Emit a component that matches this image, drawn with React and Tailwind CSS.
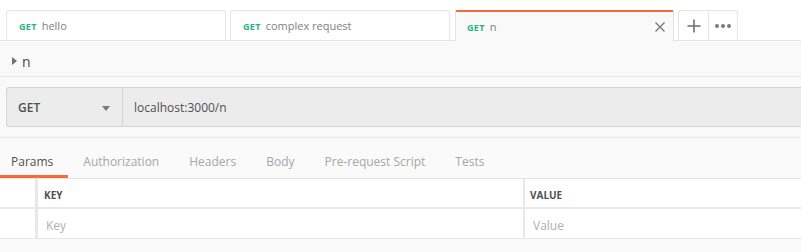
import React from "react";

const font = { fontFamily: '"Open Sans", "Liberation Sans", sans-serif' };

function Tab({ label, active, className }) {
  if (active) {
    return (
      <div
        className={`relative -mb-px h-[31px] flex items-center pt-[2px] bg-[#f9f9f9] border-x border-[#e2e2e2] border-t-2 border-t-[#f26b3a] rounded-t-[2px] ${className}`}
      >
        <span className="ml-[11px] text-[9px] font-bold text-[#26b47f] tracking-[0.3px]">GET</span>
        <span className="ml-[5px] text-[11px] text-[#808080]">{label}</span>
        <svg className="absolute right-[7px] top-[9px]" width="12" height="12" viewBox="0 0 12 12">
          <path d="M1.5 1.5 L10.5 10.5 M10.5 1.5 L1.5 10.5" stroke="#7a7a7a" strokeWidth="1.4" />
        </svg>
      </div>
    );
  }
  return (
    <div
      className={`h-[30px] flex items-center pt-[2px] bg-white border-x border-t border-[#e6e6e6] rounded-t-[3px] ${className}`}
    >
      <span className="ml-[12px] text-[9px] font-bold text-[#26b47f] tracking-[0.3px]">GET</span>
      <span className="ml-[5px] text-[11px] text-[#808080]">{label}</span>
    </div>
  );
}

export default function App() {
  const subTabs = ["Params", "Authorization", "Headers", "Body", "Pre-request Script", "Tests"];

  return (
    <div className="w-[801px] h-[252px] bg-[#f9f9f9] overflow-hidden" style={font}>
      {/* tabs row */}
      <div className="h-[41px] bg-white border-b border-[#e4e4e4] flex items-end">
        <Tab label="hello" className="ml-[6px] w-[220px]" />
        <Tab label="complex request" className="ml-[4px] w-[220px]" />
        <Tab label="n" active className="ml-[5px] w-[219px]" />
        <div className="ml-[4px] h-[30px] flex border-x border-t border-[#e6e6e6] rounded-t-[3px] bg-white">
          <div className="w-[30px] flex items-center justify-center border-r border-[#e6e6e6]">
            <svg width="14" height="14" viewBox="0 0 14 14">
              <path d="M7 0.5 V13.5 M0.5 7 H13.5" stroke="#6e6e6e" strokeWidth="1.6" />
            </svg>
          </div>
          <div className="w-[28px] flex items-center justify-center gap-[2px]">
            <span className="w-[4px] h-[4px] rounded-full bg-[#7a7a7a]" />
            <span className="w-[4px] h-[4px] rounded-full bg-[#7a7a7a]" />
            <span className="w-[4px] h-[4px] rounded-full bg-[#7a7a7a]" />
          </div>
        </div>
      </div>

      {/* request name */}
      <div className="h-[36px] border-b border-[#e4e4e4] flex items-center pt-[5px]">
        <svg className="ml-[12px]" width="5" height="8" viewBox="0 0 5 8">
          <path d="M0 0 L5 4 L0 8 Z" fill="#707070" />
        </svg>
        <span className="ml-[5px] text-[14px] text-[#4a4a4a] leading-none pt-[1px]">n</span>
      </div>

      {/* url bar */}
      <div className="mt-[10px] ml-[6px] h-[40px] flex bg-[#ececec] border border-r-0 border-[#d4d4d4] rounded-l-[3px]">
        <div className="w-[116px] flex items-center border-r border-[#d4d4d4] pt-[2px]">
          <span className="ml-[11px] text-[12px] font-semibold text-[#505050]">GET</span>
          <svg className="ml-auto mr-[12px]" width="8" height="5" viewBox="0 0 8 5">
            <path d="M0 0 H8 L4 5 Z" fill="#7a7a7a" />
          </svg>
        </div>
        <div className="flex items-center pl-[11px] pt-[2px] text-[12px] text-[#505050]">localhost:3000/n</div>
      </div>

      {/* sub tabs */}
      <div className="mt-[10px] h-[42px] border-t border-[#e8e8e8] border-b border-b-[#e4e4e4] flex items-end bg-[#fafafa]">
        {subTabs.map((t, i) => (
          <div
            key={t}
            className={`h-[41px] flex items-center text-[12px] ${
              i === 0
                ? "pl-[11px] pr-[15px] text-[#505050] border-b-[3px] border-[#f26b3a] pt-[11px]"
                : "px-[15px] text-[#a6a6a6] pt-[8px]"
            }`}
          >
            {t}
          </div>
        ))}
      </div>

      {/* params table */}
      <div className="bg-white border-b border-[#e6e6e6]">
        <div className="h-[30px] flex border-b-2 border-[#e8e8e8]">
          <div className="w-[38px] border-r-[3px] border-[#e8e8e8]" />
          <div className="w-[487px] flex items-center pl-[6px] pt-[4px] text-[10px] font-bold text-[#505050] border-r-2 border-[#e8e8e8]">
            KEY
          </div>
          <div className="flex-1 flex items-center pl-[5px] pt-[4px] text-[10px] font-bold text-[#505050]">VALUE</div>
        </div>
        <div className="h-[29px] flex">
          <div className="w-[38px] border-r-[3px] border-[#e8e8e8]" />
          <div className="w-[487px] flex items-center pl-[8px] pt-[5px] text-[12px] text-[#b0b0b0] border-r-2 border-[#e8e8e8]">
            Key
          </div>
          <div className="flex-1 flex items-center pl-[8px] pt-[5px] text-[12px] text-[#b0b0b0]">Value</div>
        </div>
      </div>
    </div>
  );
}
